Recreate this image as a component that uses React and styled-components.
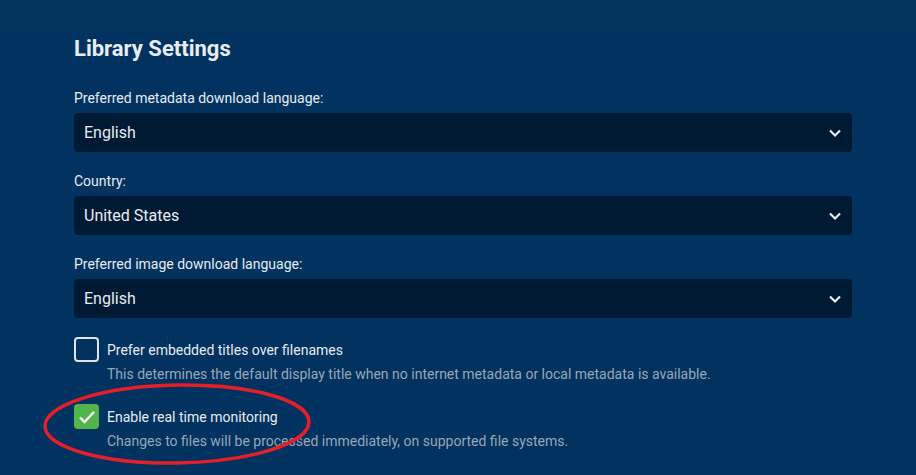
import React from "react";
import styled, { createGlobalStyle } from "styled-components";

const Global = createGlobalStyle`
  html, body { margin: 0; padding: 0; }
  body {
    background: #02325f;
    font-family: Roboto, "Noto Sans", sans-serif;
    color: #e6ecf2;
    overflow: hidden;
  }
`;

const Page = styled.div`
  position: relative;
  width: 916px;
  height: 475px;
  background: linear-gradient(#04345f 0, #04345f 32px, #02325f 32px);
`;

const Content = styled.div`
  padding: 34px 64px 0 74px;
`;

const Title = styled.h2`
  margin: 0 0 26px;
  font-size: 22px;
  font-weight: 700;
  line-height: 30px;
  color: #e8edf3;
`;

const Fields = styled.div`
  display: flex;
  flex-direction: column;
  gap: 21px;
  margin-bottom: 19px;
`;

const Field = styled.div``;

const Label = styled.label`
  display: block;
  font-size: 14px;
  line-height: 17px;
  margin-bottom: 6px;
  color: #e6ecf2;
`;

const SelectBox = styled.div`
  display: flex;
  align-items: center;
  justify-content: space-between;
  height: 39px;
  padding: 0 10px;
  border-radius: 4px;
  background: #011a33;
  font-size: 16px;
  color: #e6ecf2;
`;

const CheckRow = styled.div`
  display: flex;
  align-items: flex-start;
  gap: 8px;
  margin-bottom: ${(p) => p.$gap}px;
`;

const Box = styled.div`
  flex: none;
  width: 25px;
  height: 25px;
  box-sizing: border-box;
  border-radius: 4px;
  border: ${(p) => (p.$checked ? "none" : "2px solid #dfe5ec")};
  background: ${(p) => (p.$checked ? "#52b54b" : "transparent")};
  display: flex;
  align-items: center;
  justify-content: center;
`;

const CheckText = styled.div`
  padding-top: 5px;
`;

const CheckLabel = styled.div`
  font-size: 14px;
  line-height: 17px;
  color: #e6ecf2;
`;

const Help = styled.div`
  margin-top: 7px;
  font-size: 14px;
  line-height: 17px;
  color: #97a7b9;
`;

const Annotation = styled.svg`
  position: absolute;
  left: 0;
  top: 0;
  pointer-events: none;
`;

const Chevron = () => (
  <svg width="14" height="10" viewBox="0 0 14 10">
    <path d="M2 2.5 L7 7.5 L12 2.5" fill="none" stroke="#e6ecf2" strokeWidth="2.2" />
  </svg>
);

const Select = ({ label, value }) => (
  <Field>
    <Label>{label}</Label>
    <SelectBox>
      <span>{value}</span>
      <Chevron />
    </SelectBox>
  </Field>
);

const Check = ({ checked, label, help, gap }) => (
  <CheckRow $gap={gap}>
    <Box $checked={checked}>
      {checked && (
        <svg width="18" height="14" viewBox="0 0 18 14">
          <path d="M2 7.5 L6.5 12 L16 2" fill="none" stroke="#fff" strokeWidth="2.4" />
        </svg>
      )}
    </Box>
    <CheckText>
      <CheckLabel>{label}</CheckLabel>
      <Help>{help}</Help>
    </CheckText>
  </CheckRow>
);

export default function App() {
  return (
    <Page>
      <Global />
      <Content>
        <Title>Library Settings</Title>
        <Fields>
          <Select label="Preferred metadata download language:" value="English" />
          <Select label="Country:" value="United States" />
          <Select label="Preferred image download language:" value="English" />
        </Fields>
        <Check
          gap={21}
          label="Prefer embedded titles over filenames"
          help="This determines the default display title when no internet metadata or local metadata is available."
        />
        <Check
          checked
          gap={0}
          label="Enable real time monitoring"
          help="Changes to files will be processed immediately, on supported file systems."
        />
      </Content>
      <Annotation width="916" height="475">
        <ellipse cx="177" cy="424" rx="132" ry="39" fill="none" stroke="#e3202a" strokeWidth="3.5" transform="rotate(-1 177 424)" />
      </Annotation>
    </Page>
  );
}
